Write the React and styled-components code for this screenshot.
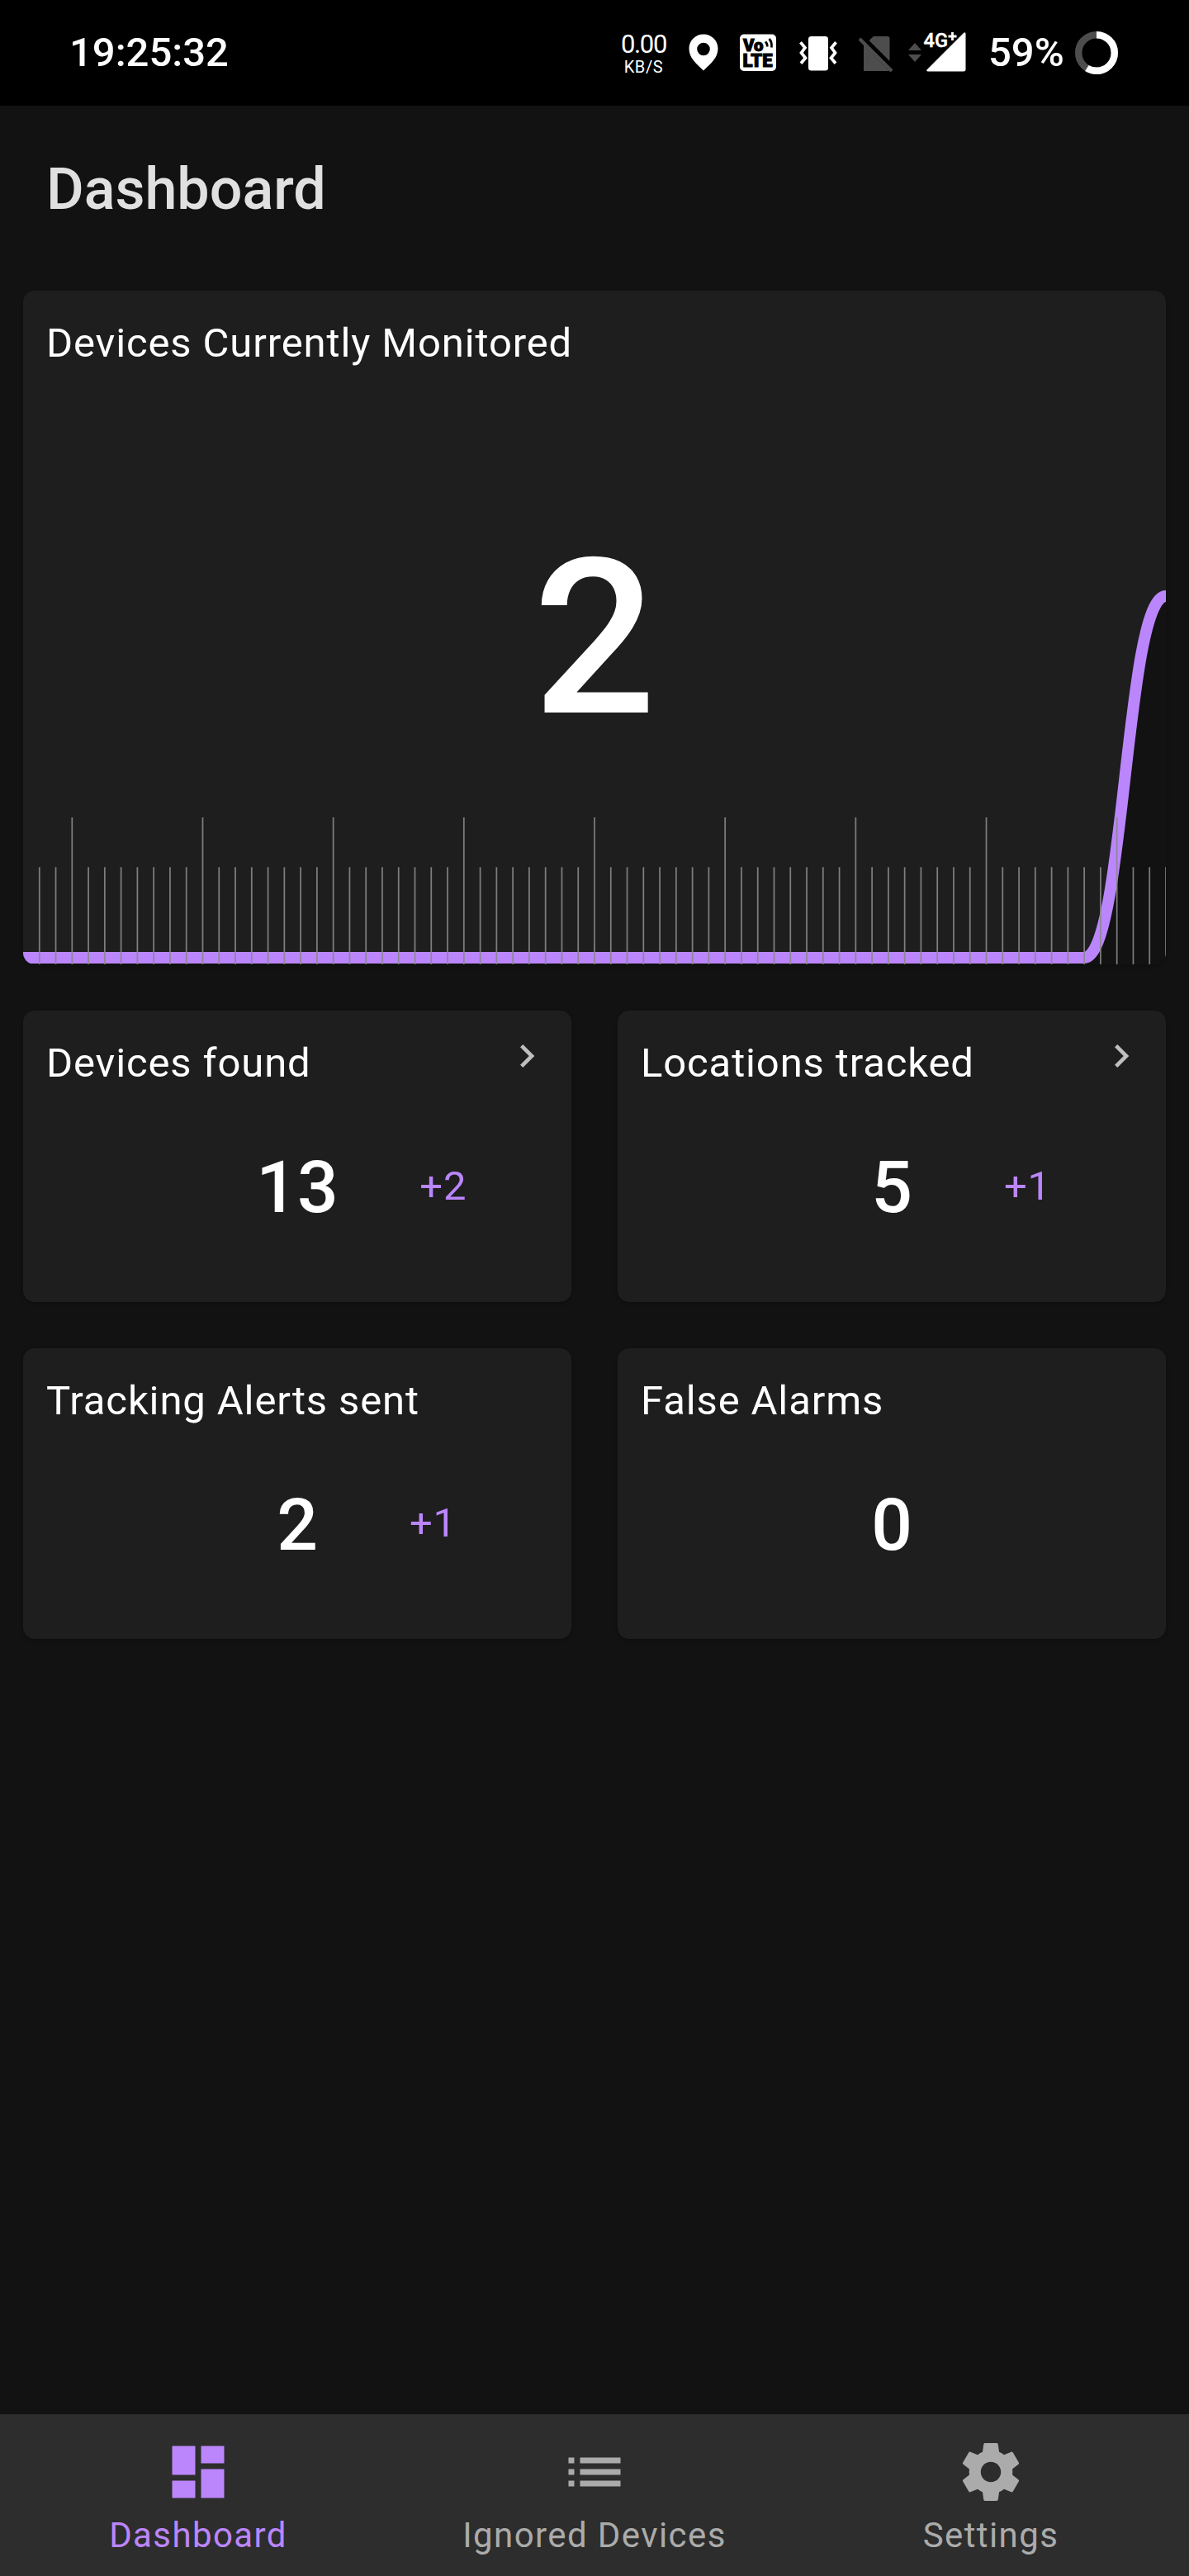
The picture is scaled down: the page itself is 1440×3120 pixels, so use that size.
import React from "react";
import styled, { createGlobalStyle } from "styled-components";

const GlobalStyle = createGlobalStyle`
  * { box-sizing: border-box; }
  body { margin: 0; background: #121212; font-family: Roboto, "Noto Sans", sans-serif; }
`;

const Screen = styled.div`
  width: 1440px;
  height: 3120px;
  display: flex;
  flex-direction: column;
  background: #121212;
  color: #fff;
`;

const StatusBar = styled.header`
  height: 128px;
  background: #000;
  display: flex;
  justify-content: space-between;
  padding: 0 85px 0 84px;
  flex: none;
`;

const Clock = styled.div`
  font-size: 49px;
  font-weight: 500;
  line-height: 57px;
  padding-top: 35px;
`;

const Indicators = styled.div`
  display: flex;
  align-items: flex-start;
`;

const Speed = styled.div`
  width: 60px;
  padding: 36px 1px 0 0;
  display: flex;
  flex-direction: column;
  align-items: center;
  white-space: nowrap;
`;

const SpeedValue = styled.span`
  font-size: 31px;
  line-height: 35px;
  letter-spacing: -1.3px;
`;

const SpeedUnit = styled.span`
  font-size: 20px;
  line-height: 20px;
  letter-spacing: 0.6px;
`;

const StatusSvg = styled.svg`
  display: block;
  flex: none;
  margin-left: ${(p) => p.$gap || 0}px;
`;

const Title = styled.h1`
  margin: 0;
  height: 224px;
  padding: 60px 0 0 56px;
  font-size: 70px;
  line-height: 82px;
  font-weight: 500;
  color: #e0e0e0;
  flex: none;
`;

const Main = styled.main`
  flex: 1;
  padding: 0 28px;
  display: flex;
  flex-direction: column;
  gap: 56px;
`;

const Card = styled.section`
  background: #1e1e1e;
  border-radius: 14px;
  overflow: hidden;
  display: flex;
  flex-direction: column;
  box-shadow: 0 2px 4px rgba(0, 0, 0, 0.25);
`;

const ChartCard = styled(Card)`
  height: 816px;
  display: grid;
  grid-template: 100% / 100%;

  & > * {
    grid-area: 1 / 1;
  }
`;

const CardTitle = styled.h2`
  margin: 0;
  padding: 35px 28px 0;
  font-size: 49px;
  line-height: 57px;
  font-weight: 400;
  letter-spacing: 0.875px;
`;

const BigCount = styled.div`
  align-self: center;
  justify-self: center;
  font-size: 262.5px;
  line-height: 308px;
  font-weight: 500;
  padding-top: 26px;
`;

const Grid = styled.div`
  display: grid;
  grid-template-columns: 1fr 1fr;
  gap: 56px;
`;

const StatCard = styled(Card)`
  height: ${(p) => p.$height}px;
`;

const StatHead = styled.div`
  display: flex;
  justify-content: space-between;
  height: 128px;
`;

const Chevron = styled.svg`
  width: 56px;
  height: 56px;
  margin: 27px 26px 0 0;
`;

const StatBody = styled.div`
  display: grid;
  grid-template-columns: 1fr auto 1fr;
  align-items: start;
  padding: 0 28px;
`;

const Count = styled.span`
  grid-column: 2;
  font-size: 87.5px;
  line-height: 102px;
  font-weight: 500;
  padding-top: 35px;
`;

const Delta = styled.span`
  justify-self: center;
  font-size: 49px;
  line-height: 57px;
  letter-spacing: 0.875px;
  color: #bb86fc;
  padding-top: ${(p) => p.$top}px;
`;

const BottomNav = styled.nav`
  height: 196px;
  background: #2d2d2d;
  display: grid;
  grid-template-columns: repeat(3, 1fr);
  flex: none;
`;

const NavItem = styled.div`
  display: flex;
  flex-direction: column;
  align-items: center;
  padding-top: 28px;
  color: ${(p) => (p.$active ? "#bb86fc" : "#ababab")};
`;

const NavIcon = styled.svg`
  width: 84px;
  height: 84px;
  fill: currentColor;
`;

const NavLabel = styled.span`
  margin-top: 10px;
  font-size: 42px;
  line-height: 49px;
  letter-spacing: 1.4px;
`;

const STEP = 1384 / 70;
const ticks = Array.from({ length: 70 }, (_, i) => i + 1);

function Chart() {
  return (
    <svg width="1384" height="816" viewBox="0 0 1384 816">
      <path d="M0 808H1285C1334.5 808 1334.5 370 1384 370V816H0Z" fill="#121212" />
      <path d="M0 808H1285C1334.5 808 1334.5 370 1384 370" fill="none" stroke="#bb86fc" strokeWidth="14" />
      {ticks.map((k) => (
        <line
          key={k}
          x1={k * STEP}
          x2={k * STEP}
          y1={k % 8 === 3 ? 638 : 698.3}
          y2="816"
          stroke="#888888"
          strokeOpacity="0.9"
          strokeWidth="1.75"
        />
      ))}
    </svg>
  );
}

function StatusIcons() {
  return (
    <>
      <StatusSvg width="484" height="128" viewBox="810 0 484 128">
        <path fill="#fff" fillRule="evenodd" d="M852 41.5c-9.7 0-17.5 7.6-17.5 17.3C834.5 70 843 77 852 85.5C861 77 869.5 70 869.5 58.8C869.5 49.1 861.7 41.5 852 41.5ZM852 51.7a7.8 7.8 0 1 1 0 15.6a7.8 7.8 0 0 1 0-15.6Z" />
        <rect x="896" y="41.5" width="44" height="44.5" rx="5" fill="#fff" />
        <text x="900" y="61.5" fontSize="21" fontWeight="900" textLength="24.5" lengthAdjust="spacingAndGlyphs" fill="#000" stroke="#000" strokeWidth="1.1">Vo</text>
        <text x="899.5" y="81" fontSize="22" fontWeight="900" textLength="36" lengthAdjust="spacingAndGlyphs" fill="#000" stroke="#000" strokeWidth="1.1">LTE</text>
        <path d="M927 50.500q2.500 2.500 2.200 6M931.500 47q4 4.500 2.800 10.500" fill="none" stroke="#000" strokeWidth="2.700" />
        <rect x="979" y="44" width="24" height="41.5" rx="3.5" fill="#fff" />
        <path d="M969.5 51.2l5.500 6.600l-4.500 6.200l5 6.300l-5.500 6.500M1012.500 51.2l-5.500 6.600l4.500 6.200l-5 6.300l5.500 6.500" fill="none" stroke="#fff" strokeWidth="3.700" />
        <path d="M1058 44h17q2.500 0 2.500 2.500V74L1052.500 49ZM1046 54V86H1077Z" fill="#4d4d4d" />
        <path d="M1041 47L1080 86" stroke="#4d4d4d" strokeWidth="4" />
        <path d="M1108 52l8 9h-16ZM1100 66h16l-8 9Z" fill="#4d4d4d" />
        <path d="M1167 40q2.500-2 2.500 1V84q0 2.500-2.500 2.500H1124q-3 0-1-2.500Z" fill="#fff" />
        <text x="1118.500" y="56.5" fontSize="23" fontWeight="500" fill="#fff" stroke="#fff" strokeWidth="0.4" textLength="29.5" lengthAdjust="spacingAndGlyphs">4G</text>
        <path d="M1148.500 44h10M1153.500 39v10" stroke="#fff" strokeWidth="2.800" />
        <text x="1197" y="80" fontSize="49" fontWeight="500" fill="#fff">59%</text>
      </StatusSvg>
      <StatusSvg $gap={7} width="54" height="128" viewBox="0 0 54 128">
        <circle cx="27" cy="64" r="21.8" fill="none" stroke="#4d4d4d" strokeWidth="8.4" />
        <circle cx="27" cy="64" r="21.8" fill="none" stroke="#fff" strokeWidth="8.4" pathLength="100" strokeDasharray="59 41" transform="rotate(-90 27 64)" />
      </StatusSvg>
    </>
  );
}

function Stat({ title, value, delta, link, height, deltaTop }) {
  return (
    <StatCard $height={height}>
      <StatHead>
        <CardTitle>{title}</CardTitle>
        {link && (
          <Chevron viewBox="0 0 24 24" fill="#bfbfbf">
            <path d="M10 6L8.59 7.41L13.17 12l-4.58 4.59L10 18l6-6Z" />
          </Chevron>
        )}
      </StatHead>
      <StatBody>
        <Count>{value}</Count>
        {delta && <Delta $top={deltaTop}>{delta}</Delta>}
      </StatBody>
    </StatCard>
  );
}

export default function App() {
  return (
    <Screen>
      <GlobalStyle />
      <StatusBar>
        <Clock>19:25:32</Clock>
        <Indicators>
          <Speed>
            <SpeedValue>0.00</SpeedValue>
            <SpeedUnit>KB/S</SpeedUnit>
          </Speed>
          <StatusIcons />
        </Indicators>
      </StatusBar>
      <Title>Dashboard</Title>
      <Main>
        <ChartCard>
          <Chart />
          <CardTitle>Devices Currently Monitored</CardTitle>
          <BigCount>2</BigCount>
        </ChartCard>
        <Grid>
          <Stat title="Devices found" value="13" delta="+2" link height={353} deltaTop={56} />
          <Stat title="Locations tracked" value="5" delta="+1" link height={353} deltaTop={56} />
          <Stat title="Tracking Alerts sent" value="2" delta="+1" height={352} deltaTop={55} />
          <Stat title="False Alarms" value="0" height={352} />
        </Grid>
      </Main>
      <BottomNav>
        <NavItem $active>
          <NavIcon viewBox="0 0 24 24">
            <path d="M3 13h8V3H3zM3 21h8v-6H3zM13 21h8V11h-8zM13 3v6h8V3z" />
          </NavIcon>
          <NavLabel>Dashboard</NavLabel>
        </NavItem>
        <NavItem>
          <NavIcon viewBox="0 0 24 24">
            <path d="M3 13h2v-2H3zM3 17h2v-2H3zM3 9h2V7H3zM7 13h14v-2H7zM7 17h14v-2H7zM7 7v2h14V7z" />
          </NavIcon>
          <NavLabel>Ignored Devices</NavLabel>
        </NavItem>
        <NavItem>
          <NavIcon viewBox="0 0 24 24">
            <path d="M19.43 12.98c.04-.32.07-.64.07-.98s-.03-.66-.07-.98l2.11-1.65c.19-.15.24-.42.12-.64l-2-3.46c-.12-.22-.39-.3-.61-.22l-2.49 1c-.52-.4-1.08-.73-1.69-.98l-.38-2.65C14.46 2.18 14.25 2 14 2h-4c-.25 0-.46.18-.49.42l-.38 2.65c-.61.25-1.17.59-1.69.98l-2.49-1c-.23-.09-.49 0-.61.22l-2 3.46c-.13.22-.07.49.12.64l2.11 1.65c-.04.32-.07.65-.07.98s.03.66.07.98l-2.11 1.65c-.19.15-.24.42-.12.64l2 3.46c.12.22.39.3.61.22l2.49-1c.52.4 1.08.73 1.69.98l.38 2.65c.03.24.24.42.49.42h4c.25 0 .46-.18.49-.42l.38-2.65c.61-.25 1.17-.59 1.69-.98l2.49 1c.23.09.49 0 .61-.22l2-3.46c.12-.22.07-.49-.12-.64zM12 15.5c-1.93 0-3.5-1.57-3.5-3.5s1.57-3.5 3.5-3.5 3.5 1.57 3.5 3.5-1.57 3.5-3.5 3.5z" />
          </NavIcon>
          <NavLabel>Settings</NavLabel>
        </NavItem>
      </BottomNav>
    </Screen>
  );
}
